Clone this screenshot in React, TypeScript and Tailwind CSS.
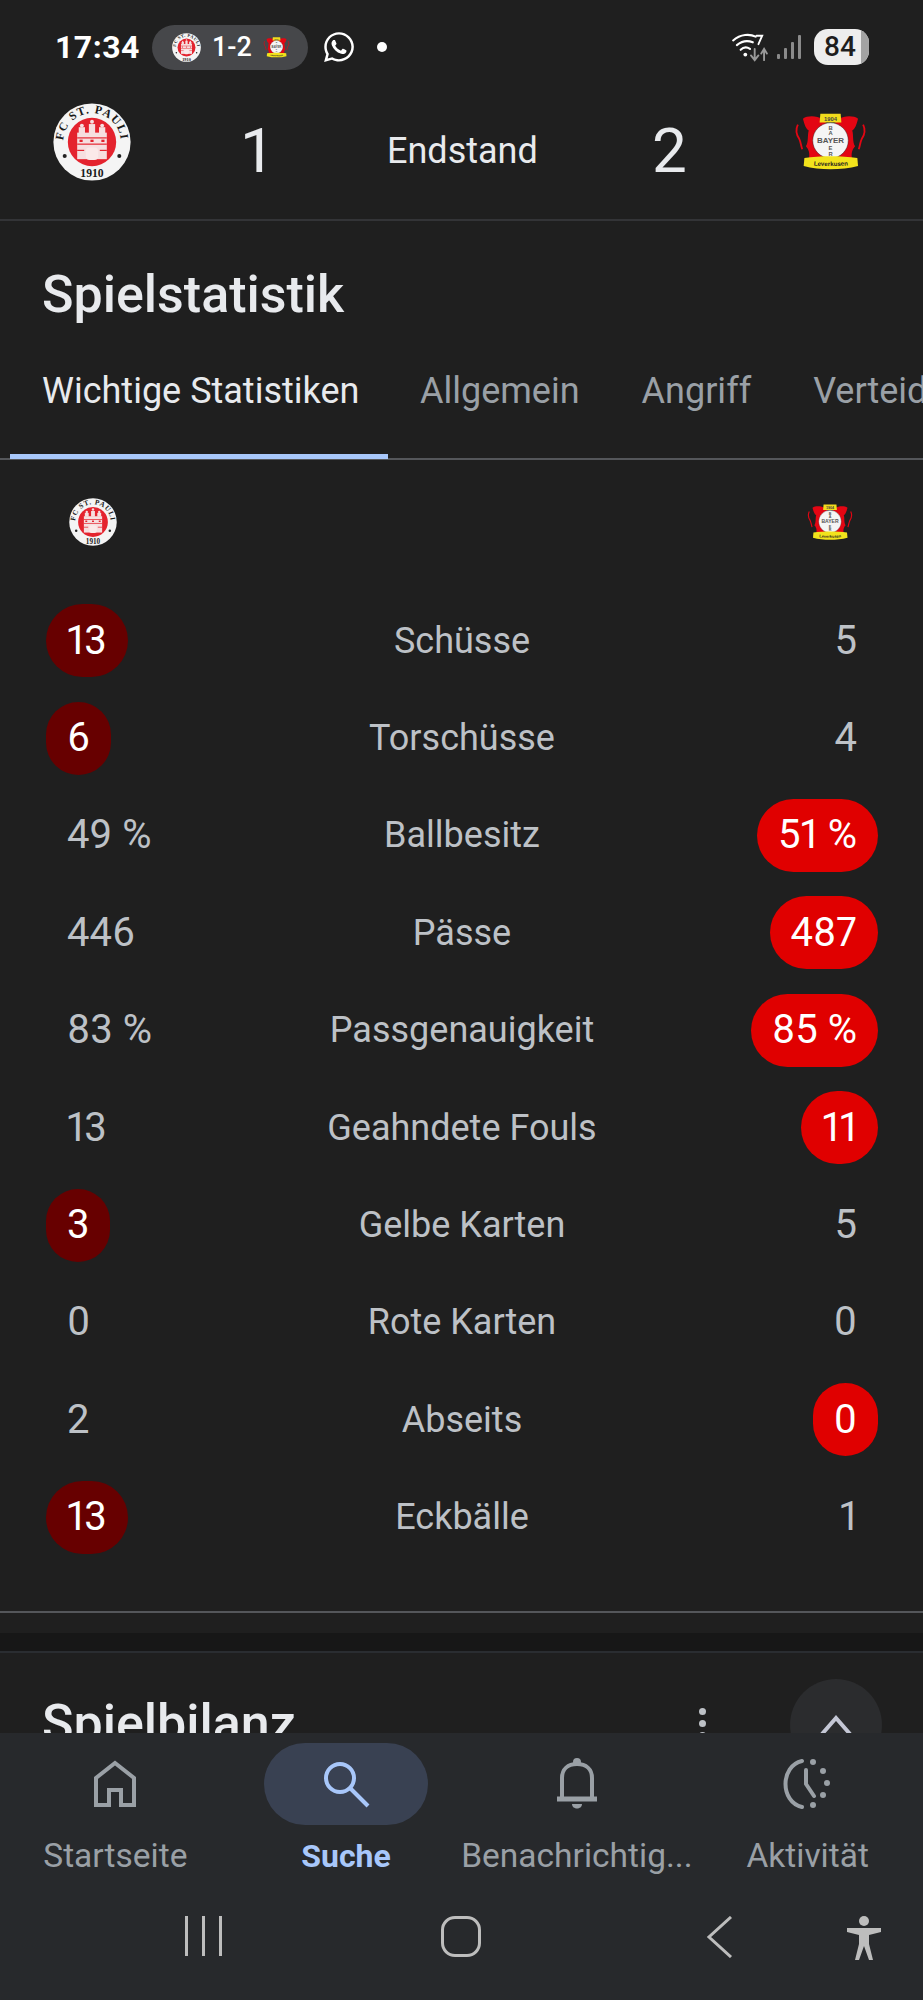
import React from "react";
import { FaWhatsapp } from "react-icons/fa";

const PauliLogo = ({ className, id }: { className: string; id: string }) => (
  <svg viewBox="0 0 100 100" className={className}>
    <circle cx="50" cy="50" r="49.5" fill="#f4f4f4" />
    <path id={id} d="M 13 50 A 37 37 0 0 1 87 50" fill="none" />
    <text fontSize="15" fontWeight="900" fill="#1a1a1a" fontFamily="'Liberation Serif', serif" letterSpacing="1.5">
      <textPath href={`#${id}`} startOffset="50%" textAnchor="middle">FC ST. PAULI</textPath>
    </text>
    <text x="50" y="95" textAnchor="middle" fontSize="15" fontWeight="900" fill="#1a1a1a" fontFamily="'Liberation Serif', serif">1910</text>
    <circle cx="15" cy="68" r="2.6" fill="#222" />
    <circle cx="85" cy="68" r="2.6" fill="#222" />
    <circle cx="50" cy="50" r="31" fill="#e4232e" />
    <g fill="#f6dfe0">
      <rect x="31" y="38" width="38" height="34" />
      <rect x="33" y="31" width="8" height="8" />
      <rect x="46" y="27" width="8" height="12" />
      <rect x="59" y="31" width="8" height="8" />
      <circle cx="37" cy="29" r="2.5" />
      <circle cx="50" cy="24" r="2.5" />
      <circle cx="63" cy="29" r="2.5" />
    </g>
    <g fill="#e4232e">
      <rect x="31" y="44" width="38" height="1.5" />
      <rect x="31" y="52" width="38" height="1.5" />
      <rect x="31" y="60" width="9" height="1.5" />
      <rect x="60" y="60" width="9" height="1.5" />
      <rect x="34" y="47" width="4" height="3" />
      <rect x="48" y="47" width="4" height="3" />
      <rect x="62" y="47" width="4" height="3" />
    </g>
    <rect x="42" y="57" width="16" height="16" rx="5" fill="#fbe9e9" />
  </svg>
);

const BayerLogo = ({ className, id }: { className: string; id: string }) => (
  <svg viewBox="0 0 100 80" className={className}>
    <g fill="#e30613">
      <path d="M12 8 C18 3 32 4 38 8 L46 16 C38 20 32 30 32 40 C32 50 36 58 42 64 L20 64 C22 56 20 50 16 46 C20 40 18 30 20 24 C16 22 14 16 12 8 Z" />
      <path d="M88 8 C82 3 68 4 62 8 L54 16 C62 20 68 30 68 40 C68 50 64 58 58 64 L80 64 C78 56 80 50 84 46 C80 40 82 30 80 24 C84 22 86 16 88 8 Z" />
    </g>
    <g fill="none" stroke="#e30613" strokeWidth="2.5">
      <path d="M5 16 C1 24 3 30 7 36 C9 40 9 44 11 50" />
      <path d="M95 16 C99 24 97 30 93 36 C91 40 91 44 89 50" />
    </g>
    <path d="M36 1 L64 1 L65 13 L35 13 Z" fill="#f2dc1c" />
    <text x="50" y="10.5" textAnchor="middle" fontSize="8" fontWeight="700" fill="#444" fontFamily="'Liberation Sans', sans-serif">1904</text>
    <circle cx="50" cy="38" r="24.5" fill="#f5f5f5" stroke="#222" strokeWidth="0.6" />
    <path d="M14 62 C35 59 65 59 87 62 L88 73 C65 79 35 79 13 73 Z" fill="#f2e31c" />
    <path id={id} d="M17 71 C35 74 65 74 84 71" fill="none" />
    <text fontSize="8.5" fontWeight="700" fill="#222" fontFamily="'Liberation Sans', sans-serif">
      <textPath href={`#${id}`} startOffset="50%" textAnchor="middle">Leverkusen</textPath>
    </text>
    <text x="50" y="42" textAnchor="middle" fontSize="11" fontWeight="700" fill="#555" fontFamily="'Liberation Sans', sans-serif">BAYER</text>
    <text x="50" y="23" textAnchor="middle" fontSize="8" fontWeight="700" fill="#555" fontFamily="'Liberation Sans', sans-serif">B</text>
    <text x="50" y="31" textAnchor="middle" fontSize="8" fontWeight="700" fill="#555" fontFamily="'Liberation Sans', sans-serif">A</text>
    <text x="50" y="51" textAnchor="middle" fontSize="8" fontWeight="700" fill="#555" fontFamily="'Liberation Sans', sans-serif">E</text>
    <text x="50" y="59" textAnchor="middle" fontSize="8" fontWeight="700" fill="#555" fontFamily="'Liberation Sans', sans-serif">R</text>
  </svg>
);

type Stat = { label: string; left: string; right: string; win?: "left" | "right" };

const stats: Stat[] = [
  { label: "Schüsse", left: "13", right: "5", win: "left" },
  { label: "Torschüsse", left: "6", right: "4", win: "left" },
  { label: "Ballbesitz", left: "49 %", right: "51 %", win: "right" },
  { label: "Pässe", left: "446", right: "487", win: "right" },
  { label: "Passgenauigkeit", left: "83 %", right: "85 %", win: "right" },
  { label: "Geahndete Fouls", left: "13", right: "11", win: "right" },
  { label: "Gelbe Karten", left: "3", right: "5", win: "left" },
  { label: "Rote Karten", left: "0", right: "0" },
  { label: "Abseits", left: "2", right: "0", win: "right" },
  { label: "Eckbälle", left: "13", right: "1", win: "left" },
];

const StatRow = ({ stat }: { stat: Stat }) => (
  <div className="grid h-[97.4px] grid-cols-[1fr_auto_1fr] items-center pl-[46px] pr-[45px] text-[36px] text-[#bdc1c6]">
    <div className="flex justify-start text-[40px] proportional-nums">
      <span className={`flex h-[73px] items-center rounded-full px-[21px] ${stat.win === "left" ? "bg-[#670000] text-white" : ""}`}>{stat.left}</span>
    </div>
    <span>{stat.label}</span>
    <div className="flex justify-end text-[40px] proportional-nums">
      <span className={`flex h-[73px] items-center rounded-full px-[21px] ${stat.win === "right" ? "bg-[#e00000] text-white" : ""}`}>{stat.right}</span>
    </div>
  </div>
);

const StatusBar = () => (
  <div className="flex h-[94px] shrink-0 items-center pl-[55px] pr-[54px] text-white">
    <span className="text-[32px] font-bold tracking-[0.5px]">17:34</span>
    <div className="ml-[12px] flex h-[45px] w-[156px] items-center gap-[11px] rounded-full bg-[#46474a] pl-[20px]">
      <PauliLogo id="pill-pauli" className="h-[29px] w-[29px]" />
      <span className="text-[27px] font-medium leading-none">1-2</span>
      <BayerLogo id="pill-bayer" className="h-[21px] w-[27px]" />
    </div>
    <FaWhatsapp className="ml-[14px] h-[34px] w-[34px]" />
    <span className="ml-[21px] h-[10px] w-[10px] rounded-full bg-white" />
    <div className="ml-auto flex items-center">
      <svg viewBox="0 0 40 32" className="h-[30px] w-[38px]" fill="none" strokeLinecap="round">
        <path d="M2 9 C10 2 20 2 26 5" stroke="#fff" strokeWidth="2.2" />
        <path d="M6 14 C12 9 18 9 23 11" stroke="#fff" strokeWidth="2.2" />
        <path d="M10 19 C13 16 17 16 20 18" stroke="#fff" strokeWidth="2.2" />
        <circle cx="15" cy="24" r="2" fill="#fff" />
        <path d="M27 4 H33 L29 13" stroke="#fff" strokeWidth="2" />
        <path d="M25 18 V29 M21 25 L25 30 L29 25" stroke="#999" strokeWidth="2" />
        <path d="M35 30 V19 M32 23 L35 18 L38 23" stroke="#999" strokeWidth="2" />
      </svg>
      <svg viewBox="0 0 26 26" className="ml-[7px] h-[26px] w-[26px]" fill="#8a8a8a">
        <rect x="1" y="20" width="3" height="5" rx="1" />
        <rect x="8" y="14" width="3" height="11" rx="1" />
        <rect x="15" y="8" width="3" height="17" rx="1" />
        <rect x="22" y="1" width="3" height="24" rx="1" />
      </svg>
      <div className="relative ml-[12px] flex h-[36px] w-[55px] items-center overflow-hidden rounded-[14px] bg-[#ededed] pl-[10px] text-[28px] font-medium leading-none text-[#1d1d1d]">
        84
        <span className="absolute inset-y-0 right-0 w-[8px] bg-[#a3a3a3]" />
      </div>
    </div>
  </div>
);

const NavItem = ({ label, icon, active }: { label: string; icon: React.ReactNode; active?: boolean }) => (
  <div className="flex w-[231px] flex-col items-center">
    <div className={`flex h-[82px] w-[164px] items-center justify-center rounded-full ${active ? "bg-[#394152]" : ""}`}>{icon}</div>
    <span className={`mt-[11px] whitespace-nowrap leading-[40px] ${active ? "text-[32px] font-bold text-[#a8c7fa]" : "text-[33.5px] text-[#9aa0a6]"}`}>{label}</span>
  </div>
);

export default function App() {
  return (
    <div className="flex h-[2000px] w-[923px] flex-col overflow-hidden bg-[#1f1f1f] font-['Roboto',sans-serif]">
      <div className="relative flex min-h-0 flex-1 flex-col overflow-hidden">
        <StatusBar />
        <div className="flex h-[127px] shrink-0 items-center border-b-2 border-[#333437] pb-[12px] pl-[53px] pr-[55px] text-[#e8eaed]">
          <PauliLogo id="head-pauli" className="-mt-[18px] h-[78px] w-[78px]" />
          <span className="ml-[109px] w-[24px] text-center text-[62px]">1</span>
          <span className="ml-[123px] w-[150px] whitespace-nowrap text-center text-[36px]">Endstand</span>
          <span className="ml-[115px] w-[30px] text-center text-[62px]">2</span>
          <BayerLogo id="head-bayer" className="-mt-[18px] ml-auto h-[58px] w-[75px]" />
        </div>

        <h2 className="shrink-0 pl-[42px] pt-[41px] text-[52px] font-medium leading-[66px] text-[#e8eaed]">Spielstatistik</h2>

        <div className="relative mt-[26px] flex h-[106px] shrink-0 border-b-2 border-[#54565a] pl-[10px] text-[36px] whitespace-nowrap text-[#9aa0a6]">
          <div className="relative h-[104px] w-[378px] shrink-0 pl-[32px] pt-[10px] text-[#e8eaed]">
            Wichtige Statistiken
            <span className="absolute inset-x-0 bottom-[-1px] h-[5px] bg-[#a8c7fa]" />
          </div>
          <span className="ml-[32px] pt-[10px]">Allgemein</span>
          <span className="ml-[62px] pt-[10px]">Angriff</span>
          <span className="ml-[62px] pt-[10px]">Verteidigung</span>
        </div>

        <div className="flex shrink-0 items-center justify-between pl-[69px] pr-[70px] pt-[38px]">
          <PauliLogo id="small-pauli" className="h-[48px] w-[48px]" />
          <BayerLogo id="small-bayer" className="h-[37px] w-[46px]" />
        </div>

        <div className="mt-[46px] shrink-0">
          {stats.map((s) => <StatRow key={s.label} stat={s} />)}
        </div>

        <div className="mt-[45px] h-[2px] shrink-0 bg-[#54565a]" />
        <div className="mt-[20px] h-[18px] shrink-0 bg-[#171717]" />
        <div className="h-[2px] shrink-0 bg-[#2a2d31]" />
        <div className="flex shrink-0 items-center justify-between pl-[42px] pt-[38px]">
          <span className="text-[52px] font-medium leading-[66px] text-[#e8eaed]">Spielbilanz</span>
        </div>
        <div className="absolute right-[41px] top-[1679px] h-[92px] w-[92px] rounded-full bg-[#2b2c2e]">
          <svg viewBox="0 0 40 40" className="absolute left-[26px] top-[27px] h-[40px] w-[40px]" fill="none" stroke="#c4c7d5" strokeWidth="4">
            <path d="M6 28 L20 12 L34 28" />
          </svg>
        </div>
        <div className="absolute left-[699px] top-[1708px] flex flex-col gap-[5px]">
          <span className="h-[7px] w-[7px] rounded-full bg-[#bdc1c6]" />
          <span className="h-[7px] w-[7px] rounded-full bg-[#bdc1c6]" />
          <span className="h-[7px] w-[7px] rounded-full bg-[#bdc1c6]" />
        </div>
      </div>

      <div className="relative h-[267px] shrink-0 bg-[#27292c]">
        <div className="flex pt-[10px]">
          <NavItem label="Startseite" icon={
            <svg viewBox="0 0 44 48" className="h-[48px] w-[44px]" fill="none" stroke="#9aa0a6" strokeWidth="4">
              <path d="M3 45 V18 L22 3 L41 18 V45 H28 V30 H16 V45 Z" />
            </svg>
          } />
          <NavItem active label="Suche" icon={
            <svg viewBox="0 0 48 48" className="h-[48px] w-[48px]" fill="none" stroke="#a8c7fa" strokeWidth="4">
              <circle cx="18" cy="18" r="14" />
              <path d="M28 28 L46 46" />
            </svg>
          } />
          <NavItem label="Benachrichtig..." icon={
            <svg viewBox="0 0 44 52" className="h-[52px] w-[44px]" fill="none" stroke="#9aa0a6" strokeWidth="4">
              <path d="M7 40 V20 C7 11 13 6 22 6 C31 6 37 11 37 20 V40" />
              <path d="M2 41 H42" strokeWidth="5" />
              <circle cx="22" cy="4" r="2" fill="#9aa0a6" />
              <path d="M17 46 H27 C27 52 17 52 17 46 Z" fill="#9aa0a6" stroke="none" />
            </svg>
          } />
          <NavItem label="Aktivität" icon={
            <svg viewBox="0 0 56 52" className="h-[52px] w-[56px]" fill="none" stroke="#9aa0a6" strokeWidth="4" strokeLinecap="round">
              <path d="M22 3 C0 8 0 44 22 49" />
              <path d="M26 12 V26 L34 38" />
              <g fill="#9aa0a6" stroke="none">
                <circle cx="33" cy="4" r="3" />
                <circle cx="43" cy="13" r="3" />
                <circle cx="47" cy="25" r="3" />
                <circle cx="43" cy="37" r="3" />
                <circle cx="33" cy="47" r="3" />
              </g>
            </svg>
          } />
        </div>
        <div className="relative mt-[40px] h-[50px]">
          <div className="absolute left-[185px] top-0 flex h-[40px] gap-[14px]">
            <span className="h-[40px] w-[3px] bg-[#bdbdbd]" />
            <span className="h-[40px] w-[3px] bg-[#bdbdbd]" />
            <span className="h-[40px] w-[3px] bg-[#bdbdbd]" />
          </div>
          <span className="absolute left-[441px] top-0 h-[41px] w-[40px] rounded-[14px] border-[3px] border-[#bdbdbd]" />
          <svg viewBox="0 0 28 42" className="absolute left-[706px] top-0 h-[42px] w-[28px]" fill="none" stroke="#bdbdbd" strokeWidth="3">
            <path d="M25 1 L3 21 L25 41" />
          </svg>
          <svg viewBox="0 0 36 44" className="absolute left-[846px] top-0 h-[44px] w-[36px]" fill="#bdbdbd">
            <circle cx="18" cy="5" r="5" />
            <path d="M1 12 H35 V16 L23 19 V28 L27 44 H23 L18 30 L13 44 H9 L13 28 V19 L1 16 Z" />
          </svg>
        </div>
      </div>
    </div>
  );
}
